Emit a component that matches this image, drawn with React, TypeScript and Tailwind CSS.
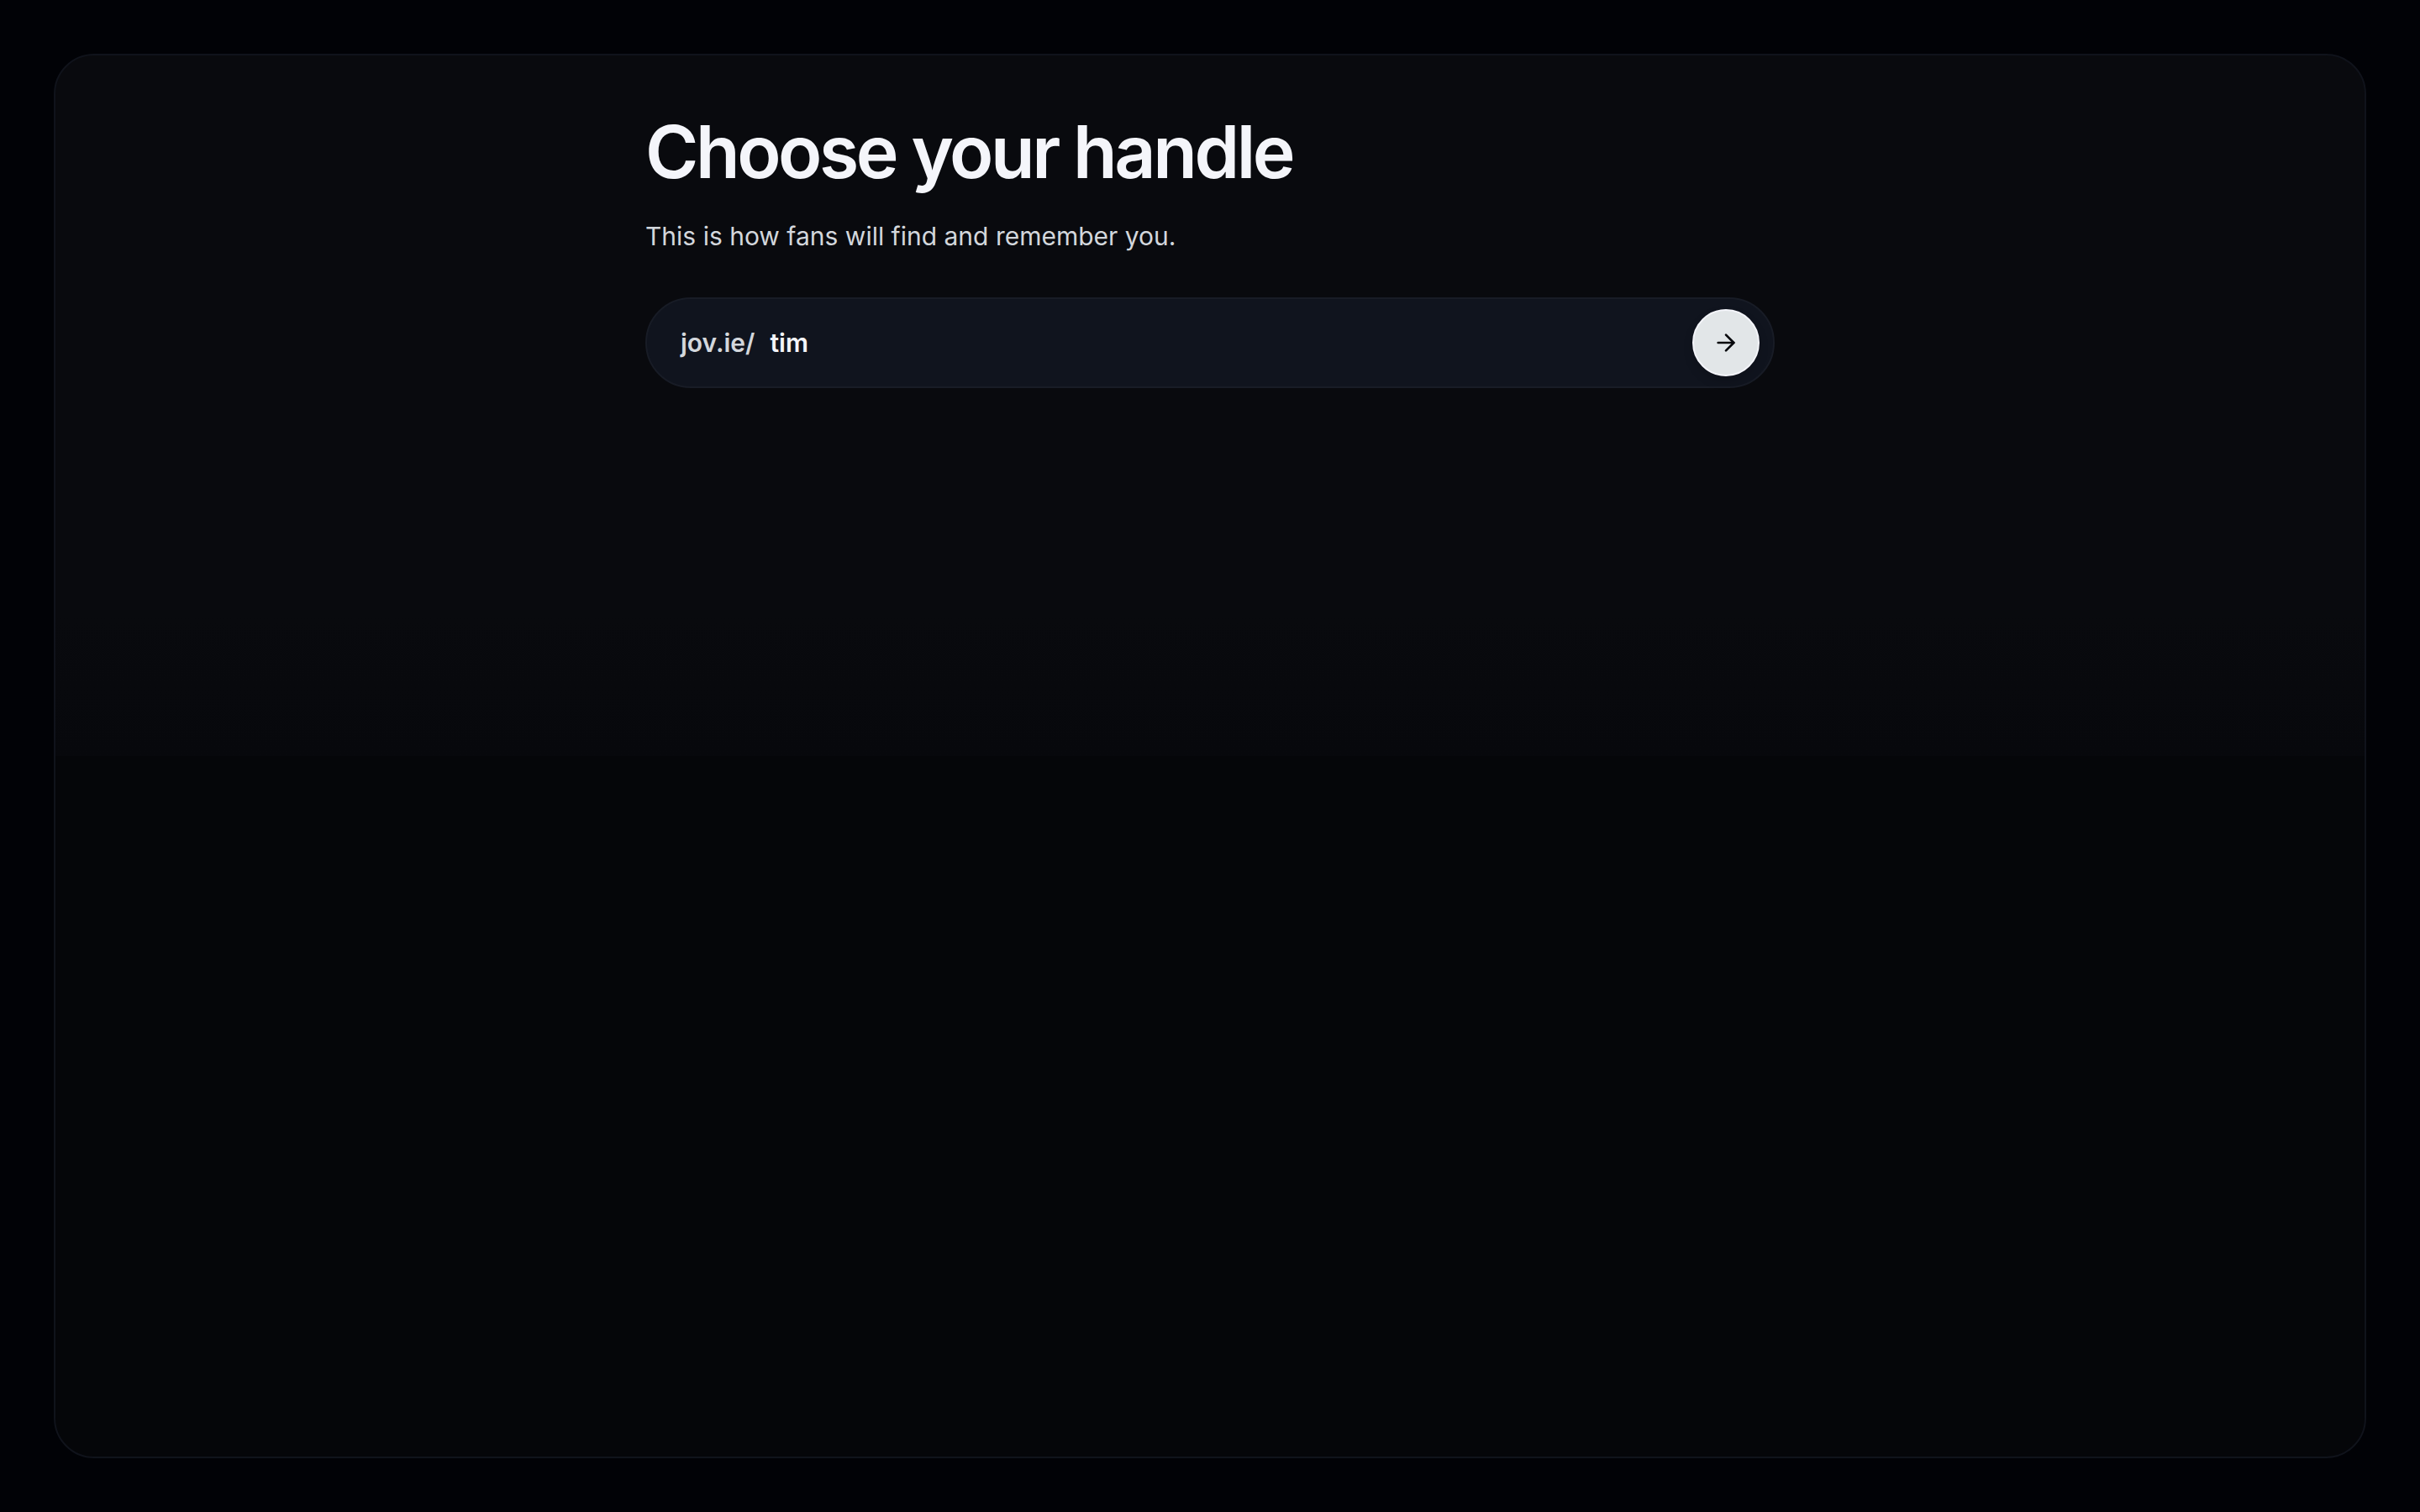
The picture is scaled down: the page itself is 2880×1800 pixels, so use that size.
import { ArrowRight } from 'lucide-react';
import { useState } from 'react';

export default function App() {
  const [handle, setHandle] = useState('tim');

  return (
    <div className="flex min-h-screen bg-[#010206] p-16 font-['Inter',sans-serif]">
      <main className="flex-1 rounded-[48px] border-2 border-[#10131b] bg-[linear-gradient(to_bottom,#090a0e_0%,#090a0e_40%,#07080c_50%,#050609_50%,#050609_100%)] px-8 pt-18">
        <form className="mx-auto w-full max-w-[1344px]" onSubmit={(event) => event.preventDefault()}>
          <h1 className="text-[86px] leading-[86px] font-semibold tracking-[-0.04em] text-[#f4f5fa]">Choose your handle</h1>
          <p className="mt-[34px] text-[30px] leading-[46px] text-[#d3d7dc]">This is how fans will find and remember you.</p>
          <div className="mt-[50px] flex h-[108px] items-center gap-[18px] rounded-full border-2 border-[#181c26] bg-[#10141e] pr-4 pl-10 text-[30px] font-semibold">
            <label htmlFor="handle" className="text-[#d3d7dc]">
              jov.ie/
            </label>
            <input
              id="handle"
              type="text"
              autoComplete="off"
              value={handle}
              onChange={(event) => setHandle(event.target.value)}
              className="min-w-0 flex-1 bg-transparent text-[#f4f5fa] outline-none"
            />
            <button
              type="submit"
              aria-label="Continue"
              className="flex size-20 shrink-0 items-center justify-center rounded-full border-2 border-[#f4f5fa] bg-[#e2e6e8] text-[#08090d] shadow-[0_6px_12px_rgba(0,0,0,0.15)]"
            >
              <ArrowRight className="size-8" strokeWidth={2} />
            </button>
          </div>
        </form>
      </main>
    </div>
  );
}
